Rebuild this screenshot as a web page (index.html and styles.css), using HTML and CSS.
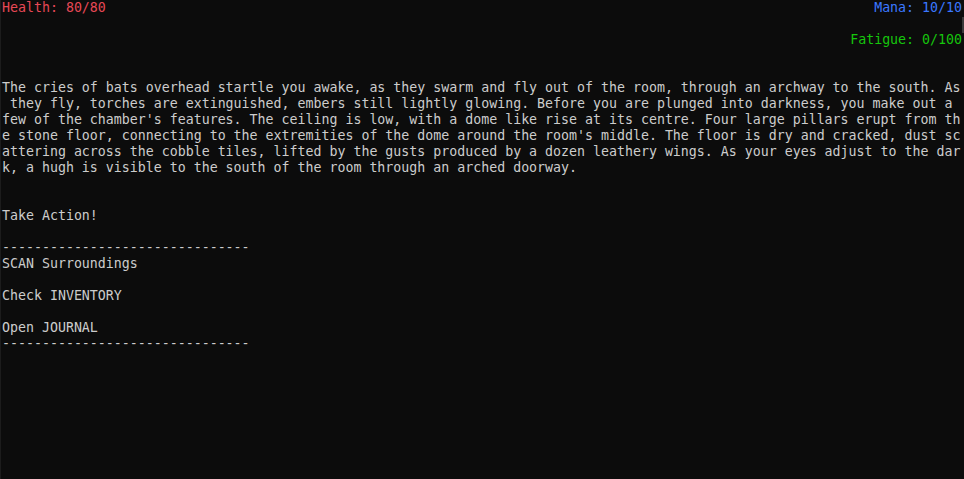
FILE: index.html
```html
<!DOCTYPE html>
<html>
<head>
<meta charset="utf-8">
<link rel="stylesheet" href="styles.css">
</head>
<body>
<div class="edge"></div>
<main class="term">
<div class="row split"><span class="health">Health: 80/80</span><span class="mana">Mana: 10/10</span></div>
<div class="row"></div>
<div class="row split"><span></span><span class="fatigue">Fatigue: 0/100</span></div>
<div class="row"></div>
<div class="row"></div>
<div class="row">The cries of bats overhead startle you awake, as they swarm and fly out of the room, through an archway to the south. As</div>
<div class="row"> they fly, torches are extinguished, embers still lightly glowing. Before you are plunged into darkness, you make out a </div>
<div class="row">few of the chamber's features. The ceiling is low, with a dome like rise at its centre. Four large pillars erupt from th</div>
<div class="row">e stone floor, connecting to the extremities of the dome around the room's middle. The floor is dry and cracked, dust sc</div>
<div class="row">attering across the cobble tiles, lifted by the gusts produced by a dozen leathery wings. As your eyes adjust to the dar</div>
<div class="row">k, a hugh is visible to the south of the room through an arched doorway.</div>
<div class="row"></div>
<div class="row"></div>
<div class="row">Take Action!</div>
<div class="row"></div>
<div class="row">-------------------------------</div>
<div class="row">SCAN Surroundings</div>
<div class="row"></div>
<div class="row">Check INVENTORY</div>
<div class="row"></div>
<div class="row">Open JOURNAL</div>
<div class="row">-------------------------------</div>
</main>
<div class="scrollbar"><div class="thumb"></div></div>
</body>
</html>
```
FILE: styles.css
```css
html, body {
  margin: 0;
  padding: 0;
  background: #0c0c0c;
  height: 100%;
  overflow: hidden;
}
body {
  display: flex;
}
.edge {
  width: 1px;
  flex: none;
  background: #1c1c1c;
}
.term {
  width: 960px;
  flex: none;
  padding-left: 1px;
  color: #cccccc;
  font-family: "DejaVu Sans Mono", monospace;
  font-size: 13.28px;
  line-height: 16px;
}
.row {
  height: 16px;
  white-space: pre;
}
.split {
  display: flex;
  justify-content: space-between;
}
.health { color: #e74856; }
.mana { color: #3b78ff; }
.fatigue { color: #16c60c; }
.scrollbar {
  flex: 1;
  position: relative;
}
.thumb {
  position: absolute;
  top: 17px;
  right: 0;
  width: 2px;
  height: 16px;
  background: #3a3a3a;
}
```
